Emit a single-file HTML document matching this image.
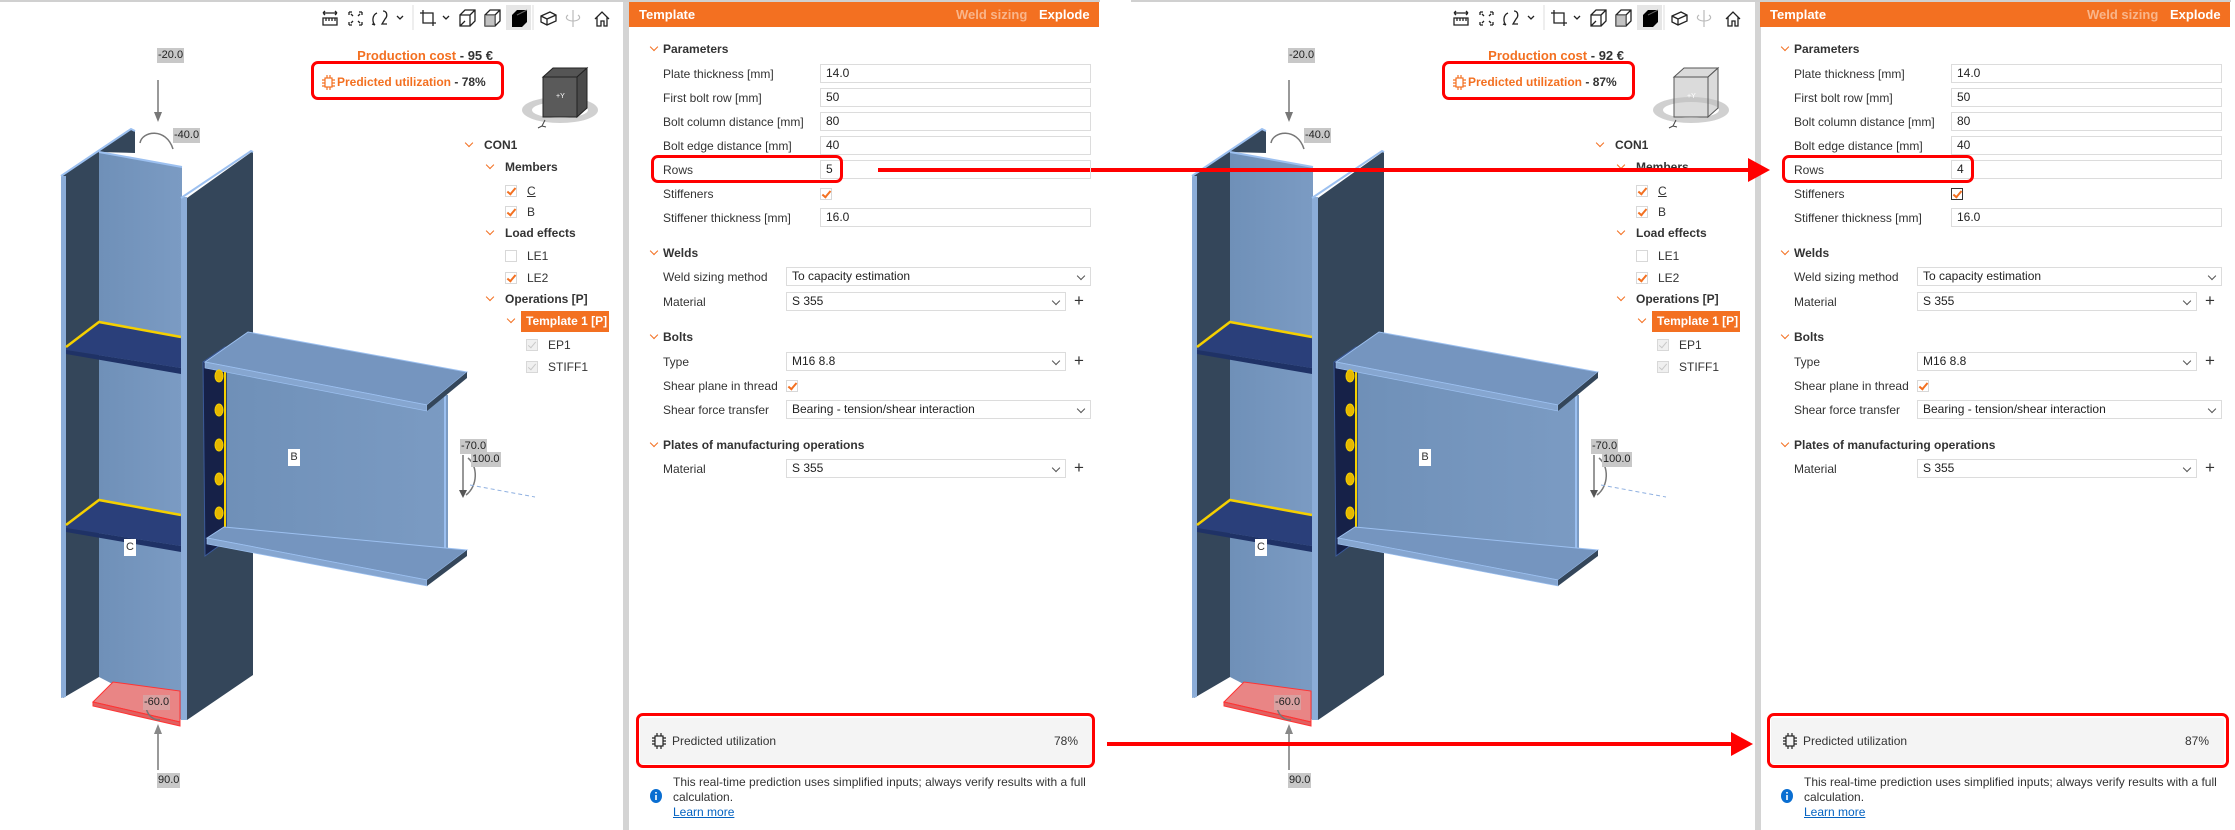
<!DOCTYPE html>
<html><head><meta charset="utf-8">
<style>
*{margin:0;padding:0;box-sizing:border-box}
body{width:2235px;height:830px;background:#fff;position:relative;overflow:hidden;font-family:"Liberation Sans",sans-serif;color:#333;font-size:12px}
.half{position:absolute;top:0;width:1104px;height:830px}
.a{position:absolute;white-space:nowrap}
.topline{position:absolute;top:0;left:0;width:1100px;height:2px;background:#d0d0d0}
.vbar{position:absolute;top:2px;left:623px;width:6px;height:828px;background:#d4d4d4}
.hdr{position:absolute;left:629px;top:2px;width:470px;height:25px;background:#f37021;color:#fff;font-weight:bold;font-size:13px}
.lbl{position:absolute;left:663px;line-height:14px;margin-top:-7px}
.inp{position:absolute;left:820px;width:271px;height:19px;border:1px solid #dcdcdc;padding-left:5px;line-height:17px;margin-top:-10px;color:#222}
.sel{position:absolute;left:786px;width:305px;height:19px;border:1px solid #dcdcdc;padding-left:5px;line-height:17px;margin-top:-10px;color:#222}
.sel.s{width:280px}
.sel:after{content:"";position:absolute;right:6px;top:5px;width:5px;height:5px;border-right:1px solid #555;border-bottom:1px solid #555;transform:rotate(45deg)}
.plus{position:absolute;left:1074px;font-size:17px;margin-top:-11px;color:#333;line-height:20px}
.sec{position:absolute;left:663px;font-weight:bold;font-size:12px;margin-top:-7px;line-height:14px;color:#333}
.chev{position:absolute;width:6px;height:6px;border-right:1.3px solid #f37021;border-bottom:1.3px solid #f37021;transform:rotate(45deg);margin-top:-5px}
.cb{position:absolute;width:12px;height:12px;border:1px solid #d8d8d8;background:#fff;margin-top:-6px}
.cb.k:after{content:"";position:absolute;left:3px;top:0px;width:3px;height:7px;border-right:2px solid #f37021;border-bottom:2px solid #f37021;transform:rotate(40deg)}
.cb.g{background:#f0f0f0}
.cb.g:after{content:"";position:absolute;left:3px;top:0px;width:3px;height:7px;border-right:1.5px solid #c8c8c8;border-bottom:1.5px solid #c8c8c8;transform:rotate(40deg)}
.tr{position:absolute;line-height:14px;margin-top:-7px;font-size:12px}
.trb{font-weight:bold}
.redbox{position:absolute;border:3px solid #f00;border-radius:7px}
.ld{position:absolute;background:#c8c8c8;font-size:11px;color:#222;height:15px;line-height:15px;padding:0 1px}
</style></head><body>

<div style="position:absolute;left:878px;top:168px;width:876px;height:4px;background:#f00"></div>
<svg style="position:absolute;left:1748px;top:158px" width="24" height="24"><polygon points="0,0 22,12 0,24" fill="#f00"/></svg>
<div style="position:absolute;left:1107px;top:742px;width:630px;height:4px;background:#f00"></div>
<svg style="position:absolute;left:1731px;top:732px" width="24" height="24"><polygon points="0,0 22,12 0,24" fill="#f00"/></svg>

<div class="half" style="left:0">
<div class="topline"></div>
<div class="vbar"></div>
<svg class="a" style="left:0;top:0" width="623" height="830">
 <defs>
  <linearGradient id="wg" x1="0" x2="1"><stop offset="0" stop-color="#6f90b8"/><stop offset="1" stop-color="#7b9bc3"/></linearGradient>
 </defs>
 <g fill="none" stroke="#222" stroke-width="1.3">
  <path d="M323 13h14M323 13l2-2M323 13l2 2M337 13l-2-2M337 13l-2 2M323 18h14v7h-14zM326 18v3M329 18v3M332 18v3M335 18v3"/>
  <path d="M349 12h3M349 12v3M362 12h-3M362 12v3M349 25h3M349 25v-3M362 25h-3M362 25v-3M351 14l2 2M360 14l-2 2M351 23l2-2M360 23l-2-2"/>
  <path d="M377 13c-5 2-5 9-2 12M375 25l-3-1M383 11c4 0 5 5 2 8l-3 5h5"/>
  <path d="M397 16l3 3 3-3"/>
  <path d="M423 10v13h13M420 13h13v13"/>
  <path d="M443 16l3 3 3-3"/>
  <path d="M460 15h10v11h-10zM460 15l5-5h10v11l-5 5M470 15l5-5M460 26l5-5"/>
  <path d="M485 15h10v11h-10zM485 15l5-5h10v11l-5 5M495 15l5-5"/>
  <path d="M541 16l9-4 6 3v6l-9 4-6-3zM541 16l6 3 9-4M547 19v6"/>
  <path d="M595 19l7-7 7 7M597 17v9h4v-5h3v5h3v-9"/>
 </g>
 <rect x="485" y="15" width="10" height="11" fill="#999" opacity=".6"/>
 <line x1="413" y1="5" x2="413" y2="30" stroke="#ddd"/>
 <line x1="533" y1="5" x2="533" y2="30" stroke="#ddd"/>
 <rect x="506" y="5" width="25" height="25" fill="#e6e6e6"/>
 <path d="M512 15l5-5h10v12l-5 5h-10z" fill="#000"/>
 <path d="M517 15l10-5" stroke="#666"/>
 <g fill="none" stroke="#bbb" stroke-width="1.2"><path d="M573 10v17M568 15c-4 3 0 6 5 6s9-3 5-6"/></g>
 <ellipse cx="560" cy="110" rx="38" ry="13" fill="#d0d0d0"/>
 <ellipse cx="560" cy="110" rx="28" ry="8" fill="#fff"/>
 <g class="cube">
 <path d="M543 77l10-9h34l-10 9z" fill="#555" stroke="#222"/>
 <path d="M577 77l10-9v40l-10 9z" fill="#4a4a4a" stroke="#222"/>
 <rect x="543" y="77" width="34" height="40" fill="#5a5a5a" stroke="#222"/>
 </g>
 <text x="556" y="98" font-size="7" fill="#fff" font-family="Liberation Sans">+Y</text>
 <path d="M545 120l-3 6M542 126l-4 2M542 126l4 1" stroke="#444" fill="none"/>
 <polygon points="61,176 131,129 135,131 135,153 99,152 99,677 63,698" fill="#34465a"/>
 <polygon points="61,176 66,176 66,697 61,698" fill="#8cadd8"/>
 <polyline points="61,176 131,129 135,131" fill="none" stroke="#9cc0f0" stroke-width="2"/>
 <polygon points="99,152 182,167 182,720 99,677" fill="url(#wg)"/>
 <line x1="99" y1="152" x2="182" y2="167" stroke="#9cc0f0" stroke-width="2"/>
 <polygon points="93,702 113,682 180,691 180,722" fill="#e98585" stroke="#f33" stroke-width="1"/>
 <polygon points="93,702 180,722 180,726 93,706" fill="#e06060" stroke="#f33" stroke-width="1"/>
 <g>
  <polygon points="66,347 99,322 181,337 181,368 66,350" fill="#2a3f7a"/>
  <polygon points="66,350 181,368 181,374 66,354" fill="#1f3266"/>
  <polyline points="66,347 99,322 181,337" fill="none" stroke="#f5d000" stroke-width="2.5"/>
  <polygon points="66,525 99,500 181,515 181,546 66,528" fill="#2a3f7a"/>
  <polygon points="66,528 181,546 181,552 66,532" fill="#1f3266"/>
  <polyline points="66,525 99,500 181,515" fill="none" stroke="#f5d000" stroke-width="2.5"/>
 </g>
 <polygon points="187,198 253,151 253,675 187,720" fill="#34465a"/>
 <polygon points="181,197 187,197 187,720 181,720" fill="#8cadd8"/>
 <polyline points="181,198 251,151 253,152" fill="none" stroke="#9cc0f0" stroke-width="2"/>
 <polygon points="203,362 225,347 227,540 205,556" fill="#162148" stroke="#3b5a99"/>
 <line x1="225" y1="370" x2="225" y2="540" stroke="#f5d000" stroke-width="2"/>
 <polygon points="227,372 448,395 448,560 227,527" fill="url(#wg)"/>
 <line x1="445" y1="395" x2="445" y2="560" stroke="#9cc0f0" stroke-width="2"/>
 <polygon points="205,362 248,332 467,372 427,405" fill="#7595bf" stroke="#9cc0f0"/>
 <polygon points="205,362 427,405 427,411 205,368" fill="#86a6d0" stroke="#9cc0f0" stroke-width=".7"/>
 <polygon points="427,405 467,372 467,378 427,411" fill="#34465a"/>
 <polygon points="207,538 224,527 467,550 427,580" fill="#7595bf" stroke="#9cc0f0"/>
 <polygon points="207,538 427,580 427,586 207,544" fill="#86a6d0" stroke="#9cc0f0" stroke-width=".7"/>
 <polygon points="427,580 467,550 467,556 427,586" fill="#34465a"/>
 <g fill="#e6b800" stroke="#f5d000"><ellipse cx="219" cy="376" rx="4" ry="6"/><ellipse cx="219" cy="410" rx="4" ry="6"/><ellipse cx="219" cy="445" rx="4" ry="6"/><ellipse cx="219" cy="479" rx="4" ry="6"/><ellipse cx="219" cy="513" rx="4" ry="6"/></g>
 <g stroke="#777" fill="none" stroke-width="1.5">
  <line x1="158" y1="80" x2="158" y2="118"/>
  <path d="M140 143c2-12 26-16 33 6"/>
  <line x1="158" y1="728" x2="158" y2="770"/>
  <path d="M148 700c-5 10 2 20 12 20"/>
  <path d="M463 455v38M468 458c10 8 10 28-2 37"/>
 </g>
 <polygon points="154,112 162,112 158,122" fill="#777"/>
 <polygon points="154,734 162,734 158,724" fill="#888"/>
 <polygon points="459,490 467,490 463,498" fill="#555"/>
 <line x1="470" y1="485" x2="535" y2="497" stroke="#8fb0e0" stroke-dasharray="4 3"/>
</svg>
<div class="ld" style="left:157px;top:48px">-20.0</div>
<div class="ld" style="left:173px;top:128px">-40.0</div>
<div class="ld" style="left:460px;top:439px">-70.0</div>
<div class="ld" style="left:471px;top:452px">100.0</div>
<div class="ld" style="left:143px;top:695px;background:#d9a0a0">-60.0</div>
<div class="ld" style="left:157px;top:773px">90.0</div>
<div class="a" style="left:288px;top:449px;width:12px;height:17px;background:#fff;font-size:11px;text-align:center;line-height:17px">B</div>
<div class="a" style="left:124px;top:539px;width:12px;height:17px;background:#fff;font-size:11px;text-align:center;line-height:17px">C</div>

<div class="chev" style="left:466px;top:145px"></div><div class="tr trb" style="left:484px;top:145px">CON1</div>
<div class="chev" style="left:487px;top:167px"></div><div class="tr trb" style="left:505px;top:167px">Members</div>
<div class="cb k" style="left:505px;top:191px"></div><div class="tr" style="left:527px;top:191px;text-decoration:underline">C</div>
<div class="cb k" style="left:505px;top:212px"></div><div class="tr" style="left:527px;top:212px">B</div>
<div class="chev" style="left:487px;top:233px"></div><div class="tr trb" style="left:505px;top:233px">Load effects</div>
<div class="cb" style="left:505px;top:256px"></div><div class="tr" style="left:527px;top:256px">LE1</div>
<div class="cb k" style="left:505px;top:278px"></div><div class="tr" style="left:527px;top:278px">LE2</div>
<div class="chev" style="left:487px;top:299px"></div><div class="tr trb" style="left:505px;top:299px">Operations [P]</div>
<div class="chev" style="left:508px;top:321px"></div>
<div class="a" style="left:521px;top:311px;width:88px;height:21px;background:#f37021;color:#fff;font-weight:bold;line-height:21px;padding-left:5px">Template 1 [P]</div>
<div class="cb g" style="left:526px;top:345px"></div><div class="tr" style="left:548px;top:345px">EP1</div>
<div class="cb g" style="left:526px;top:367px"></div><div class="tr" style="left:548px;top:367px">STIFF1</div>

<div class="hdr"><span class="a" style="left:10px;top:5px">Template</span><span class="a" style="left:327px;top:5px;color:#f9b58a">Weld sizing</span><span class="a" style="left:410px;top:5px">Explode</span></div>
<div class="chev" style="left:651px;top:49px"></div><div class="sec" style="top:49px">Parameters</div>
<div class="lbl" style="top:74px">Plate thickness [mm]</div><div class="inp" style="top:74px">14.0</div>
<div class="lbl" style="top:98px">First bolt row [mm]</div><div class="inp" style="top:98px">50</div>
<div class="lbl" style="top:122px">Bolt column distance [mm]</div><div class="inp" style="top:122px">80</div>
<div class="lbl" style="top:146px">Bolt edge distance [mm]</div><div class="inp" style="top:146px">40</div>
<div class="lbl" style="top:170px">Rows</div><div class="inp rowsv" style="top:170px">5</div>
<div class="lbl" style="top:194px">Stiffeners</div><div class="cb k stf" style="left:820px;top:194px"></div>
<div class="lbl" style="top:218px">Stiffener thickness [mm]</div><div class="inp" style="top:218px">16.0</div>
<div class="chev" style="left:651px;top:253px"></div><div class="sec" style="top:253px">Welds</div>
<div class="lbl" style="top:277px">Weld sizing method</div><div class="sel" style="top:277px">To capacity estimation</div>
<div class="lbl" style="top:302px">Material</div><div class="sel s" style="top:302px">S 355</div><div class="plus" style="top:302px">+</div>
<div class="chev" style="left:651px;top:337px"></div><div class="sec" style="top:337px">Bolts</div>
<div class="lbl" style="top:362px">Type</div><div class="sel s" style="top:362px">M16 8.8</div><div class="plus" style="top:362px">+</div>
<div class="lbl" style="top:386px">Shear plane in thread</div><div class="cb k" style="left:786px;top:386px"></div>
<div class="lbl" style="top:410px">Shear force transfer</div><div class="sel" style="top:410px">Bearing - tension/shear interaction</div>
<div class="chev" style="left:651px;top:445px"></div><div class="sec" style="top:445px">Plates of manufacturing operations</div>
<div class="lbl" style="top:469px">Material</div><div class="sel s" style="top:469px">S 355</div><div class="plus" style="top:469px">+</div>

<div class="a" style="left:640px;top:718px;width:453px;height:46px;background:#f4f4f4"></div>
<svg class="a" style="left:652px;top:733px" width="14" height="16"><g fill="none" stroke="#222" stroke-width="1.2"><rect x="3" y="3" width="8" height="10"/><path d="M0 5h3M0 8h3M0 11h3M11 5h3M11 8h3M11 11h3M5 0v3M9 0v3M5 13v3M9 13v3"/></g></svg>
<div class="a" style="left:672px;top:734px;font-size:12px">Predicted utilization</div>
<div class="a pv" style="left:1040px;top:734px;width:38px;text-align:right">78%</div>
<svg class="a" style="left:649px;top:788px" width="14" height="16"><ellipse cx="7" cy="8" rx="6" ry="7" fill="#0a6ed1"/><rect x="6.2" y="7" width="1.6" height="5" fill="#fff"/><rect x="6.2" y="4" width="1.6" height="1.6" fill="#fff"/></svg>
<div class="a" style="left:673px;top:775px">This real-time prediction uses simplified inputs; always verify results with a full</div>
<div class="a" style="left:673px;top:790px">calculation.</div>
<div class="a" style="left:673px;top:805px;color:#0563c1;text-decoration:underline">Learn more</div>

<div class="a" style="left:300px;top:48px;width:193px;text-align:right;font-weight:bold;font-size:13px"><span style="color:#f37021">Production cost</span> - <span class="pc">95</span> €</div>
<svg class="a" style="left:322px;top:75px" width="13" height="15"><g fill="none" stroke="#f37021" stroke-width="1.2"><rect x="3" y="3" width="7" height="9"/><path d="M0 5h3M0 8h3M0 11h3M10 5h3M10 8h3M10 11h3M5 0v3M8 0v3M5 12v3M8 12v3"/></g></svg>
<div class="a" style="left:337px;top:75px;font-weight:bold;font-size:12px"><span style="color:#f37021">Predicted utilization</span> - <span class="pu">78%</span></div>
</div>

<script>
(function(){
 var h=document.querySelector('.half');
 var c=h.cloneNode(true);
 c.style.left='1131px';
 c.querySelector('.rowsv').textContent='4';
 c.querySelector('.pv').textContent='87%';
 c.querySelector('.pc').textContent='92';
 c.querySelector('.pu').textContent='87%';
 c.querySelector('.stf').style.borderColor='#333';
 var v=c.querySelector('.vbar');v.style.left='624px';
 var svg=c.querySelector('svg');
 svg.innerHTML=svg.innerHTML.replace(/id="wg"/,'id="wg2"').replace(/url\(#wg\)/g,'url(#wg2)');
 var cube=svg.querySelector('.cube');
 Array.prototype.forEach.call(cube.children,function(e){e.setAttribute('fill','#bdbdbd');e.setAttribute('fill-opacity','0.55');e.setAttribute('stroke','#555');});
 document.body.insertBefore(c,document.body.firstChild);
 var boxes=[[311,61,193,39],[651,155,192,28],[636,713,459,55]];
 [0,1131].forEach(function(o,i){boxes.forEach(function(b,j){var d=document.createElement('div');d.className='redbox';
  var w=b[2]+(i&&j==2?3:0);d.style.cssText='left:'+(b[0]+o)+'px;top:'+b[1]+'px;width:'+w+'px;height:'+b[3]+'px';document.body.appendChild(d);});});
})();
</script>
</body></html>
